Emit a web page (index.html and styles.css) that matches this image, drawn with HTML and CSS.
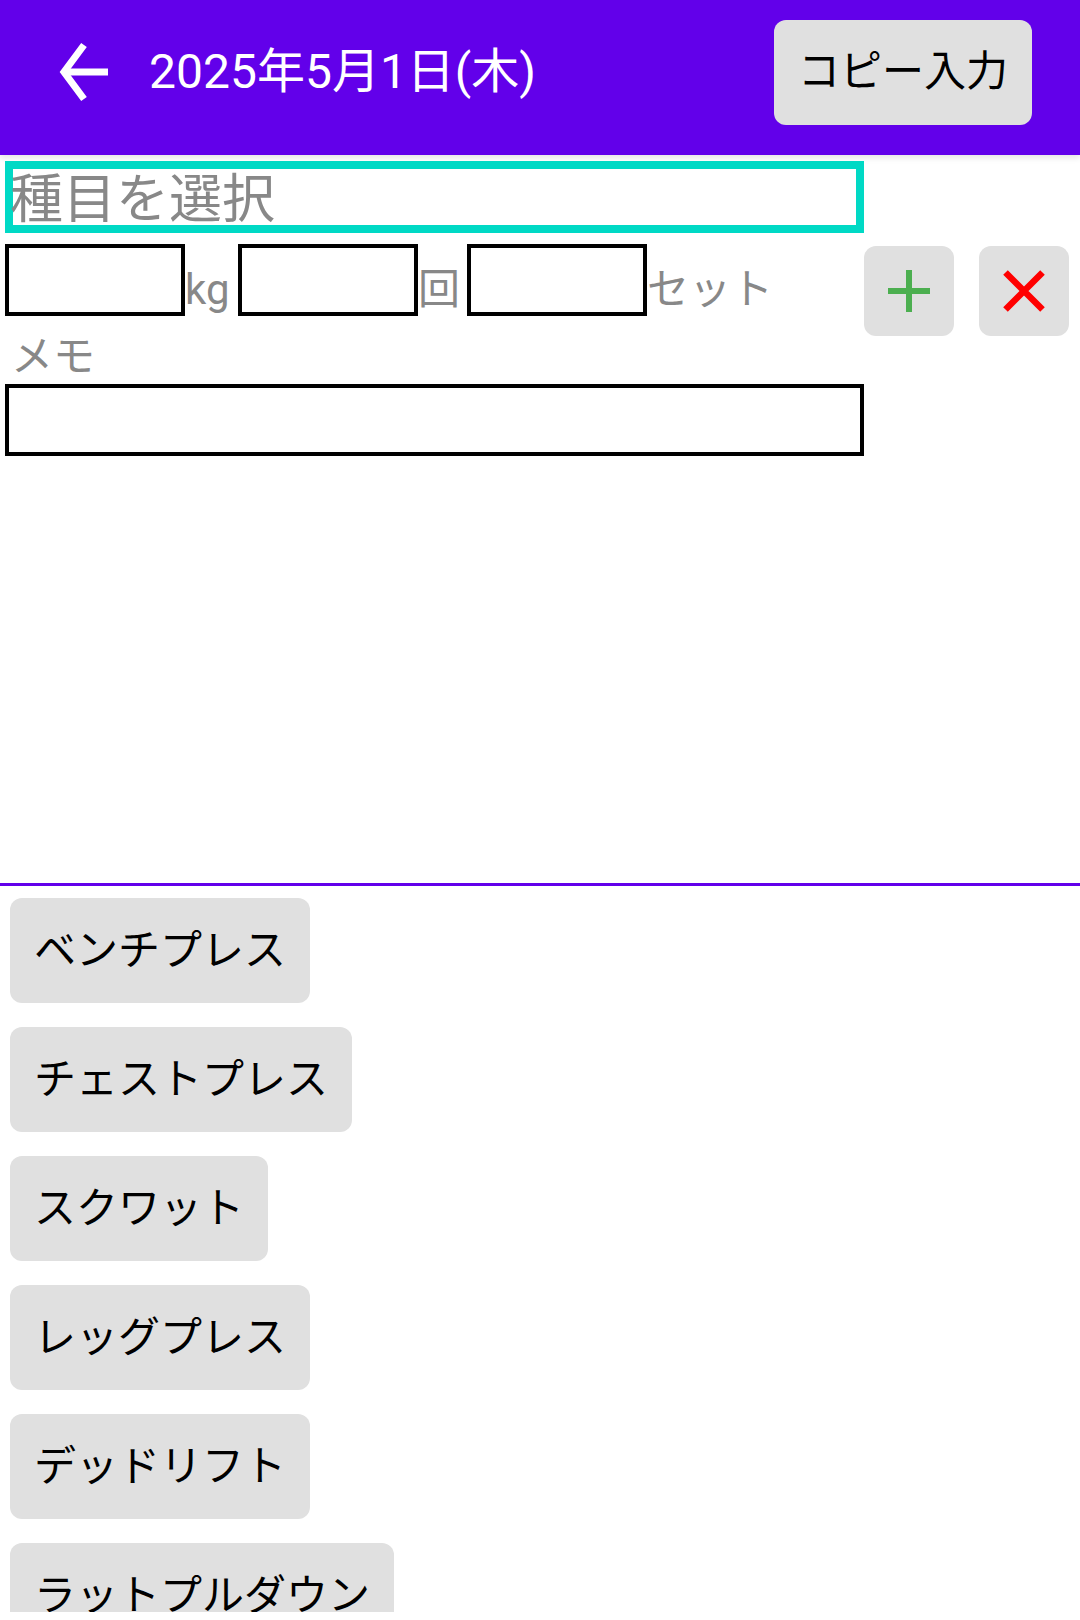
FILE: index.html
```html
<!DOCTYPE html>
<html lang="ja">
<head>
<meta charset="utf-8">
<title>2025年5月1日(木)</title>
<link rel="stylesheet" href="styles.css">
</head>
<body>
<header class="appbar">
  <svg class="back" width="56" height="68" viewBox="56 38 56 68" aria-hidden="true">
    <polyline points="84,45 64,72 84,99" fill="none" stroke="#fff" stroke-width="7" stroke-linejoin="miter"/>
    <line x1="65" y1="72" x2="108" y2="72" stroke="#fff" stroke-width="7"/>
  </svg>
  <h1 class="title">2025年5月1日(木)</h1>
  <button class="copy-btn">コピー入力</button>
</header>
<section class="form">
  <div class="select"><span class="select-text">種目を選択</span></div>
  <div class="entry-row">
    <div class="fields">
      <div class="field"></div><span class="unit unit-kg">kg</span>
      <div class="field"></div><span class="unit unit-rep">回</span>
      <div class="field"></div><span class="unit unit-set">セット</span>
    </div>
    <button class="icon-btn add" aria-label="追加">
      <svg width="42" height="42" viewBox="0 0 42 42"><path d="M0 21H42M21 0V42" stroke="#4CAF50" stroke-width="6" fill="none"/></svg>
    </button>
    <button class="icon-btn del" aria-label="削除">
      <svg width="42" height="42" viewBox="0 0 42 42"><path d="M2.5 2.5L39.5 39.5M39.5 2.5L2.5 39.5" stroke="#FF0000" stroke-width="6.5" fill="none"/></svg>
    </button>
  </div>
  <div class="memo-label">メモ</div>
  <div class="memo"></div>
</section>
<div class="divider"></div>
<section class="list">
  <button class="list-btn">ベンチプレス</button>
  <button class="list-btn">チェストプレス</button>
  <button class="list-btn">スクワット</button>
  <button class="list-btn">レッグプレス</button>
  <button class="list-btn">デッドリフト</button>
  <button class="list-btn">ラットプルダウン</button>
</section>
</body>
</html>
```
FILE: styles.css
```css
html, body {
  margin: 0;
  padding: 0;
  background: #fff;
}
body {
  width: 1080px;
  height: 1620px;
  overflow: hidden;
  font-family: Roboto, "Noto Sans CJK JP", sans-serif;
  color: #000;
}
button {
  font: inherit;
  color: inherit;
  border: none;
  margin: 0;
  cursor: pointer;
}

/* App bar */
.appbar {
  height: 155px;
  box-sizing: border-box;
  padding: 0 48px 11px 56px;
  background: #6200EA;
  display: flex;
  align-items: center;
  box-shadow: 0 3px 6px rgba(0, 0, 0, 0.10);
}
.back {
  display: block;
  flex: none;
}
.title {
  margin: 0 0 0 37px;
  font-size: 48px;
  font-weight: 400;
  color: #fff;
  line-height: 56px;
  white-space: nowrap;
}
.copy-btn {
  margin-left: auto;
  height: 105px;
  padding: 0 24px;
  background: #E0E0E0;
  border-radius: 12px;
  font-size: 42px;
  line-height: 42px;
  color: #000;
}

/* Form */
.form {
  height: 728px;
  box-sizing: border-box;
  padding: 6px 0 0 5px;
}
.select {
  width: 859px;
  height: 72px;
  box-sizing: border-box;
  border: 8px solid #00D9C5;
  font-size: 53px;
  line-height: 62px;
  color: #888;
  overflow: visible;
  white-space: nowrap;
}
.select-text {
  display: inline-block;
  margin-left: -3px;
}
.entry-row {
  margin-top: 11px;
  display: flex;
  align-items: flex-start;
}
.fields {
  width: 859px;
  height: 72px;
  display: flex;
  align-items: flex-end;
  flex: none;
}
.field {
  width: 180px;
  height: 72px;
  box-sizing: border-box;
  border: 4px solid #000;
  flex: none;
}
.unit {
  font-size: 42px;
  line-height: 42px;
  color: #888;
  margin-bottom: 5px;
  white-space: nowrap;
  flex: none;
}
.unit-kg { width: 53px; }
.unit-rep { width: 49px; }
.icon-btn {
  width: 90px;
  height: 90px;
  margin-top: 2px;
  padding: 0;
  background: #E0E0E0;
  border-radius: 12px;
  display: flex;
  align-items: center;
  justify-content: center;
  flex: none;
}
.icon-btn svg { display: block; }
.del { margin-left: 25px; }
.memo-label {
  height: 48px;
  font-size: 42px;
  line-height: 42px;
  color: #888;
  padding-left: 6px;
}
.memo {
  width: 859px;
  height: 72px;
  box-sizing: border-box;
  border: 4px solid #000;
}

.divider {
  height: 3px;
  background: #6200EA;
}

/* Exercise list */
.list {
  height: 726px;
  box-sizing: border-box;
  overflow: hidden;
  padding: 12px 0 0 10px;
  display: flex;
  flex-direction: column;
  align-items: flex-start;
  gap: 24px;
}
.list-btn {
  flex: none;
  height: 105px;
  padding: 0 24px;
  background: #E0E0E0;
  border-radius: 12px;
  font-size: 42px;
  line-height: 42px;
  color: #000;
  white-space: nowrap;
}
```
